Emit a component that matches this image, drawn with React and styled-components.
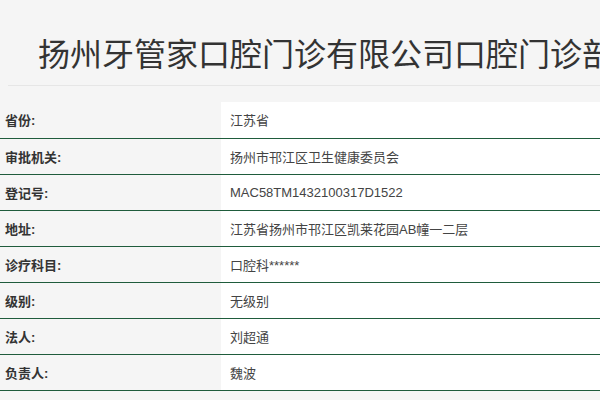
import React from 'react';
import styled, { createGlobalStyle } from 'styled-components';

const GlobalStyle = createGlobalStyle`
    html, body {
        margin: 0;
        padding: 0;
        background: #f5f5f5;
        overflow: hidden;
    }
    body {
        font-family: "Liberation Sans", "Noto Sans CJK SC", sans-serif;
    }
`;

const rows = [
    ['省份:', '江苏省'],
    ['审批机关:', '扬州市邗江区卫生健康委员会'],
    ['登记号:', 'MAC58TM1432100317D1522'],
    ['地址:', '江苏省扬州市邗江区凯莱花园AB幢一二层'],
    ['诊疗科目:', '口腔科******'],
    ['级别:', '无级别'],
    ['法人:', '刘超通'],
    ['负责人:', '魏波'],
];

const App = () => {
    return (
        <Page>
            <GlobalStyle />
            <Header>
                <Title>扬州牙管家口腔门诊有限公司口腔门诊部</Title>
            </Header>
            <InfoTable>
                <tbody>
                    {rows.map(([label, value]) => (
                        <Row key={label}>
                            <Label>{label}</Label>
                            <Value>{value}</Value>
                        </Row>
                    ))}
                </tbody>
            </InfoTable>
        </Page>
    );
};

export default App;

const Page = styled.div`
    width: 600px;
    height: 400px;
    overflow: hidden;
`;

const Header = styled.div`
    margin-left: 8px;
    padding: 36px 0 17px 30px;
    border-bottom: 1px solid #e6e6e6;
`;

const Title = styled.h1`
    margin: 0;
    font-family: "Noto Sans CJK SC", sans-serif;
    font-size: 32px;
    line-height: 32px;
    font-weight: 400;
    color: #333;
    white-space: nowrap;
`;

const InfoTable = styled.table`
    margin-top: 16px;
    width: 600px;
    border-collapse: collapse;
    border-spacing: 0;
`;

const Row = styled.tr`
    height: 36px;
    border-bottom: 1px solid #1f5c3c;
`;

const Label = styled.td`
    width: 216px;
    padding: 0 0 0 5px;
    font-size: 13px;
    font-weight: 700;
    color: #333;
    background: #f5f5f5;
    vertical-align: middle;
`;

const Value = styled.td`
    padding: 0 0 0 9px;
    font-size: 13px;
    color: #444;
    background: #fff;
    vertical-align: middle;
`;
